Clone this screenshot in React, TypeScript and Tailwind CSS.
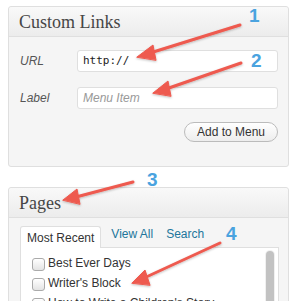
export default function App() {
  const pages = ['Best Ever Days', "Writer's Block", "How to Write a Children's Story"]

  return (
    <div className="relative w-[307px] h-[301px] overflow-hidden bg-white pt-[6px] pl-[8px]" style={{ fontFamily: '"Liberation Sans", Arial, sans-serif' }}>
      {/* Custom Links panel */}
      <div className="w-[281px] border border-[#dfdfdf] rounded-[3px] bg-[#f5f5f5]">
        <div className="h-[30px] flex items-center px-[10px] border-b border-[#dfdfdf] bg-gradient-to-b from-[#f9f9f9] to-[#ececec] rounded-t-[3px]">
          <h3 className="text-[18px] text-[#464646] pt-[1px]" style={{ fontFamily: '"Liberation Serif", Georgia, serif' }}>Custom Links</h3>
        </div>
        <div className="pl-[11px] pr-[10px] pt-[13px] pb-[24px]">
          <div className="flex items-center h-[22px]">
            <span className="w-[57px] text-[12px] italic text-[#555]">URL</span>
            <div className="flex-1 h-[22px] bg-white border border-[#dfdfdf] rounded-[3px] flex items-center px-[5px]">
              <span className="text-[11px] text-[#222]" style={{ fontFamily: '"DejaVu Sans Mono", monospace' }}>http://</span>
            </div>
          </div>
          <div className="flex items-center h-[22px] mt-[15px]">
            <span className="w-[57px] text-[12px] italic text-[#555]">Label</span>
            <div className="flex-1 h-[22px] bg-white border border-[#dfdfdf] rounded-[3px] flex items-center px-[5px]">
              <span className="text-[12px] italic text-[#999]">Menu Item</span>
            </div>
          </div>
          <div className="flex justify-end mt-[13px]">
            <button className="h-[20px] px-[12px] rounded-full border border-[#bbb] bg-gradient-to-b from-white to-[#ededed] text-[12px] text-[#333] leading-none">Add to Menu</button>
          </div>
        </div>
      </div>

      {/* Pages panel */}
      <div className="w-[281px] mt-[20px] border border-[#dfdfdf] rounded-[3px] bg-[#f5f5f5]">
        <div className="h-[30px] flex items-center px-[10px] border-b border-[#dfdfdf] bg-gradient-to-b from-[#f9f9f9] to-[#ececec] rounded-t-[3px]">
          <h3 className="text-[18px] text-[#464646] pt-[1px]" style={{ fontFamily: '"Liberation Serif", Georgia, serif' }}>Pages</h3>
        </div>
        <div className="pl-[11px] pr-[9px] pt-[7px]">
          <div className="flex items-end text-[12px]">
            <div className="h-[22px] px-[6px] flex items-center bg-white border border-b-0 border-[#dfdfdf] rounded-t-[3px] text-[#333] -mb-px relative z-10">Most Recent</div>
            <span className="ml-[10px] pb-[4px] text-[#21759b]">View All</span>
            <span className="ml-[13px] pb-[4px] text-[#21759b]">Search</span>
          </div>
          <div className="bg-white border border-[#dfdfdf] h-[80px] flex">
            <ul className="flex-1 pl-[11px] pt-[5px]">
              {pages.map((p) => (
                <li key={p} className="flex items-center h-[20px] text-[12px] text-[#333] whitespace-nowrap">
                  <span className="w-[13px] h-[13px] mr-[3px] mt-[2px] rounded-[3px] border border-[#aaa] bg-gradient-to-b from-white to-[#e4e4e4] shrink-0"></span>
                  {p}
                </li>
              ))}
            </ul>
            <div className="w-[10px] mr-[3px] mt-[2px] bg-[#f0f0f0] rounded-full flex justify-center">
              <div className="w-[8px] h-full mt-[1px] rounded-full bg-[#c2c2c2]"></div>
            </div>
          </div>
        </div>
      </div>

      {/* Annotations */}
      <svg className="absolute inset-0 pointer-events-none" width="307" height="301">
        <defs>
          <filter id="sh" x="-10%" y="-10%" width="120%" height="120%">
            <feDropShadow dx="0" dy="1" stdDeviation="1" floodColor="#000" floodOpacity="0.25" />
          </filter>
        </defs>
        <g fill="#ee5a4f" stroke="#ee5a4f" strokeLinecap="round" filter="url(#sh)">
          <line x1="240" y1="25" x2="150" y2="53" strokeWidth="3" />
          <polygon points="137,57 153,45 156,60" strokeWidth="1" strokeLinejoin="round" />
          <line x1="241" y1="63" x2="166" y2="89" strokeWidth="3" />
          <polygon points="153,93 168,81 171,96" strokeWidth="1" strokeLinejoin="round" />
          <line x1="133" y1="182" x2="76" y2="197" strokeWidth="3" />
          <polygon points="63,200 77,189 80,204" strokeWidth="1" strokeLinejoin="round" />
          <line x1="220" y1="243" x2="144" y2="278" strokeWidth="3" />
          <polygon points="132,283 145,270 150,285" strokeWidth="1" strokeLinejoin="round" />
        </g>
        <g fill="#4aa3df" fontSize="19" fontWeight="bold" fontFamily="Liberation Sans, Arial, sans-serif">
          <text x="249" y="22">1</text>
          <text x="251" y="67">2</text>
          <text x="147" y="186">3</text>
          <text x="226" y="240">4</text>
        </g>
      </svg>
    </div>
  )
}
